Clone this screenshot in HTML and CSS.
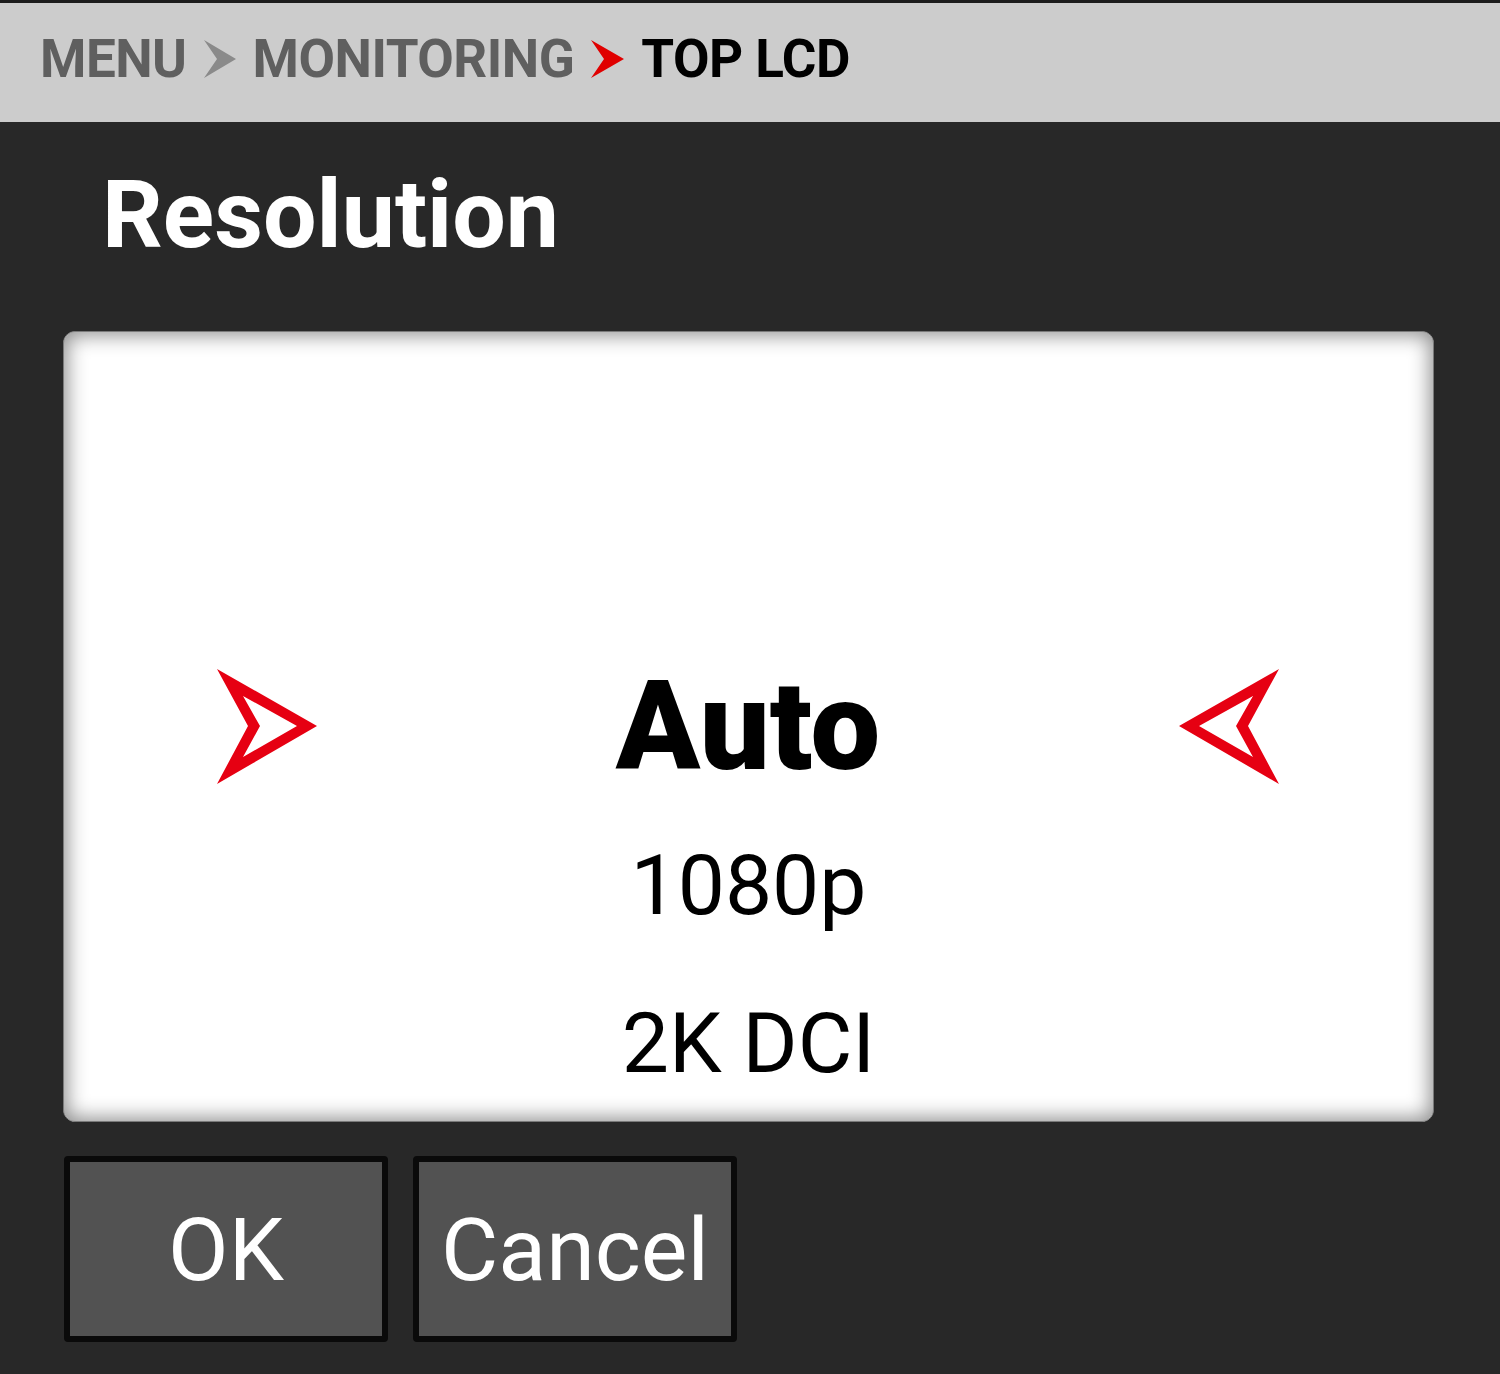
FILE: index.html
```html
<!DOCTYPE html>
<html>
<head>
<meta charset="utf-8">
<link rel="stylesheet" href="styles.css">
</head>
<body>
<header class="crumbs">
  <span class="crumb">MENU</span>
  <svg class="sep" viewBox="0 0 32 38" width="32" height="38"><polygon points="0,0 32,19 0,38 13,19" fill="#8a8a8a"/></svg>
  <span class="crumb">MONITORING</span>
  <svg class="sep" viewBox="0 0 33 38" width="33" height="38"><polygon points="0,0 33,19 0,38 13,19" fill="#e00000"/></svg>
  <span class="crumb current">TOP LCD</span>
</header>
<h1 class="title">Resolution</h1>
<section class="card">
  <div class="selected-row">
    <svg class="pointer" viewBox="0 0 100 116" width="100" height="116"><path fill-rule="evenodd" fill="#e60012" d="M0 0 L100 57 L0 115 L31 57 Z M26 27 L80 57 L26 88 L43 57 Z"/></svg>
    <span class="option selected">Auto</span>
    <svg class="pointer" viewBox="0 0 100 116" width="100" height="116"><path fill-rule="evenodd" fill="#e60012" d="M100 0 L0 57 L100 115 L69 57 Z M74 27 L20 57 L74 88 L57 57 Z"/></svg>
  </div>
  <div class="option first">1080p</div>
  <div class="option second">2K DCI</div>
</section>
<div class="actions">
  <button class="btn">OK</button>
  <button class="btn">Cancel</button>
</div>
</body>
</html>
```

FILE: styles.css
```css
html, body {
  margin: 0;
  padding: 0;
}
body {
  background: #282828;
  font-family: Roboto, "Liberation Sans", sans-serif;
  width: 1500px;
  height: 1374px;
  overflow: hidden;
}
.crumbs {
  box-sizing: border-box;
  height: 122px;
  border-top: 3px solid #1c1c1c;
  background: #cccccc;
  display: flex;
  align-items: center;
  padding: 0 0 8px 40px;
}
.crumb {
  font-weight: 700;
  font-size: 53px;
  line-height: 60px;
  color: #5f5f5f;
  letter-spacing: -0.5px;
}
.crumb.current {
  color: #000;
}
.sep {
  display: block;
  margin: 0 17px 0 17px;
}
.title {
  margin: 38px 0 0 0;
  padding-left: 102px;
  font-size: 95px;
  line-height: 110px;
  font-weight: 700;
  color: #fff;
  height: 110px;
}
.card {
  box-sizing: border-box;
  margin: 61px 66px 0 63px;
  height: 791px;
  background: #fff;
  border-radius: 12px;
  border: 1px solid #7a7a7a;
  box-shadow: inset 0 0 20px 3px rgba(0, 0, 0, 0.45);
  padding-top: 325px;
  display: flex;
  flex-direction: column;
  align-items: center;
}
.selected-row {
  align-self: stretch;
  display: flex;
  align-items: center;
  justify-content: space-between;
  padding: 0 154px 0 153px;
  height: 140px;
}
.pointer {
  display: block;
}
.option {
  color: #000;
  font-size: 84px;
  line-height: 100px;
  font-weight: 400;
}
.option.selected {
  font-size: 124px;
  line-height: 140px;
  font-weight: 900;
}
.option.first {
  margin-top: 39px;
}
.option.second {
  margin-top: 58px;
}
.actions {
  display: flex;
  gap: 25px;
  margin: 34px 0 0 64px;
}
.btn {
  box-sizing: border-box;
  width: 324px;
  height: 186px;
  background: #525252;
  border: 6px solid #0a0a0a;
  border-radius: 4px;
  color: #fff;
  font-family: Roboto, "Liberation Sans", sans-serif;
  font-size: 88px;
  font-weight: 400;
  padding: 0;
}
```
